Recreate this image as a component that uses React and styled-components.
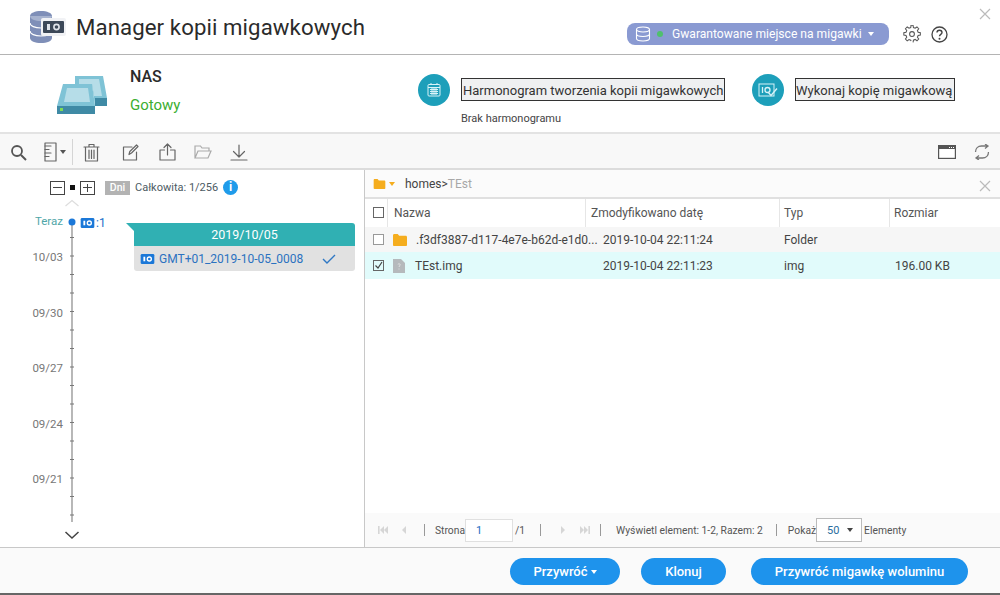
import React from 'react';
import styled, { createGlobalStyle } from 'styled-components';

const Global = createGlobalStyle`
  html, body { margin: 0; padding: 0; background: #fff; }
  body { font-family: Roboto, "Liberation Sans", sans-serif; color: #333; }
`;
const Page = styled.div`
  width: 1000px; height: 595px; display: flex; flex-direction: column; overflow: hidden; position: relative;
  border-bottom: 2px solid #666; box-sizing: border-box;
`;
const TitleBar = styled.header`
  height: 54px; flex: none; display: flex; align-items: center; padding-left: 29px; border-bottom: 1px solid #b4b4b4; background: #fff;
`;
const Title = styled.h1`
  font-size: 22.2px; font-weight: 400; margin: 0 0 0 9px; color: #2b2b2b; white-space: nowrap; letter-spacing: .1px;
`;
const Pill = styled.div`
  margin-left: 262px; margin-top: 14px; width: 262px; height: 22px; border-radius: 8px; background: #8a9ad2; color: #fff; display: flex; align-items: center; font-size: 12.1px; padding-left: 8px; box-sizing: border-box;
`;
const Dot = styled.span`width: 6px; height: 6px; border-radius: 50%; background: #4fc06c; margin: 0 9px 0 6px;`;
const Caret = styled.span`
  width: 0; height: 0; border-left: 3px solid transparent; border-right: 3px solid transparent; border-top: 4px solid ${p => p.$c || '#fff'}; margin-left: ${p => p.$ml || 0}px; display: inline-block;
`;
const TopIcons = styled.div`display: flex; align-items: center; gap: 10px; margin: 14px 0 0 14px;`;
const Close = styled.button`
  position: absolute; top: ${p => p.$t}px; right: ${p => p.$r}px; width: 12px; height: 12px; padding: 0; border: 0; background: none; display: flex;
`;
const InfoBar = styled.section`
  height: 79px; flex: none; border-bottom: 2px solid #e3e3e3; box-sizing: border-box; display: flex; background: #fff;
`;
const NasIcon = styled.div`margin: 20px 0 0 57px; width: 50px; height: 39px; flex: none;`;
const NasText = styled.div`margin: 13px 0 0 23px; width: 288px; flex: none;`;
const NasName = styled.div`font-size: 16px; font-weight: 500; color: #2b2b2b; line-height: 17px;`;
const NasState = styled.div`font-size: 15px; color: #3bae30; line-height: 17px; margin-top: 12px;`;
const Action = styled.div`display: flex; margin: 19px 0 0 ${p => p.$ml}px; align-items: flex-start;`;
const Round = styled.div`
  width: 32px; height: 32px; border-radius: 50%; background: #1d9fba; display: flex; align-items: center; justify-content: center; flex: none;
`;
const ActionCol = styled.div`margin-left: 11px; display: flex; flex-direction: column;`;
const FocusBtn = styled.div`
  height: 23px; margin-top: 4px; box-sizing: border-box; border: 1px solid #333; background: #eff0f1; font-size: 13px; color: #333; line-height: 23px; padding: 0 0 0 ${p => p.$pl}px; white-space: nowrap; width: ${p => p.$w}px;
`;
const Sub = styled.div`font-size: 11px; color: #444; margin-top: 11px;`;
const Toolbar = styled.nav`
  height: 36px; flex: none; background: #f8f8f8; border-bottom: 2px solid #dcdcdc; box-sizing: border-box; display: flex; align-items: center; padding: 2px 0 0 10px;
`;
const Tool = styled.span`display: flex; margin-left: ${p => p.$ml || 0}px; align-items: center;`;
const Sep = styled.span`width: 1px; height: 26px; background: #d5d5d5; margin-left: 6px;`;
const Main = styled.main`flex: 1; min-height: 0; display: flex;`;
const Left = styled.aside`
  width: 365px; flex: none; border-right: 1px solid #c8c8c8; box-sizing: border-box; position: relative; background: #fff;
`;
const ZoomRow = styled.div`display: flex; align-items: center; height: 17px; margin: 9px 0 0 50px;`;
const SquareBtn = styled.span`
  width: 15px; height: 14px; border: 1px solid #444; box-sizing: border-box; position: relative; display: block;
  &::before { content: ''; position: absolute; left: 2px; right: 2px; top: 5px; height: 1px; background: #444; }
  ${p => p.$plus ? `&::after { content: ''; position: absolute; top: 2px; bottom: 2px; left: 6px; width: 1px; background: #444; }` : ''}
`;
const MiniDot = styled.span`width: 5px; height: 5px; background: #111; margin: 0 5px;`;
const Dni = styled.span`
  margin-left: 10px; width: 25px; height: 14px; background: #b3b3b3; color: #fff; font-size: 10.5px; font-weight: 500; line-height: 14px; text-align: center;
`;
const Total = styled.span`font-size: 11px; color: #4d5b63; margin-left: 5px; white-space: nowrap;`;
const InfoDot = styled.span`
  width: 15px; height: 15px; border-radius: 50%; background: #1f9bea; color: #fff; font: 700 12px/15px Roboto, sans-serif; text-align: center; margin-left: 5px;
`;
const Axis = styled.div`position: absolute; left: 0; top: 0; bottom: 0; width: 130px;`;
const AxisLabels = styled.div`display: flex; flex-direction: column; position: absolute; top: 44px; left: 0; width: 63px; align-items: flex-end;`;
const AxisLabel = styled.div`
  height: ${p => p.$h}px; font-size: 11.5px; line-height: 14px; color: ${p => p.$c || '#777'};
`;
const AxisDraw = styled.svg`position: absolute; left: 62px; top: 25px;`;
const Count = styled.div`
  position: absolute; left: 80px; top: 46px; display: flex; align-items: center; font-size: 12px; color: #1a6fc9; gap: 1px;
`;
const Card = styled.div`position: absolute; left: 134px; top: 53px; width: 221px; border-radius: 3px; font-size: 12px;`;
const CardHead = styled.div`
  height: 23px; background: #30b0b3; color: #fff; text-align: center; font-size: 12.5px; line-height: 24px; border-radius: 0 3px 0 0; position: relative;
  &::before { content: ''; position: absolute; left: -8px; top: 0; width: 0; height: 0; border-top: 8px solid #30b0b3; border-left: 8px solid transparent; }
`;
const CardRow = styled.div`
  height: 25px; background: #e1e1e1; display: flex; align-items: center; padding-left: 6px; color: #2b72c0; border-radius: 0 0 3px 3px; font-size: 12px; gap: 4px;
`;
const Check = styled.span`margin-left: auto; margin-right: 19px; display: flex;`;
const Right = styled.section`flex: 1; min-width: 0; display: flex; flex-direction: column; position: relative;`;
const Crumb = styled.div`
  height: 29px; flex: none; background: #fbfbfb; border-bottom: 2px solid #e0e0e0; box-sizing: border-box; display: flex; align-items: center; padding: 1px 0 0 8px; font-size: 12px; color: #444;
`;
const CrumbPath = styled.span`margin-left: 10px;`;
const CrumbLast = styled.span`color: #a8a8a8;`;
const Row = styled.div`
  display: grid; grid-template-columns: 22px 198px 194px 110px 111px; height: ${p => p.$h}px; align-items: center; font-size: 12px; color: #444; background: ${p => p.$bg || 'transparent'};
`;
const HeadCell = styled.div`
  height: 100%; display: flex; align-items: center; box-sizing: border-box; padding: 0 0 1px ${p => p.$pl ?? 5}px; border-left: ${p => p.$nb ? 0 : '1px solid #e6e6e6'}; color: #555;
`;
const Cell = styled.div`display: flex; align-items: center; padding-left: ${p => p.$pl ?? 0}px; white-space: nowrap; gap: ${p => p.$gap ?? 8}px; min-width: 0;`;
const Box = styled.span`
  width: 11px; height: 11px; border: 1px solid ${p => p.$c || '#666'}; box-sizing: border-box; display: block; margin-left: 8px; background: ${p => p.$bg || '#fff'}; flex: none;
`;
const Spacer = styled.div`flex: 1;`;
const Pager = styled.div`
  height: 34px; flex: none; background: #fafafa; display: flex; align-items: center; padding-left: 12px; font-size: 10.3px; color: #555; white-space: nowrap;
`;
const PagerSep = styled.span`width: 1px; height: 12px; background: #999; margin: 0 ${p => p.$r}px 0 ${p => p.$l}px;`;
const PagerGap = styled.span`width: ${p => p.$w}px; flex: none;`;
const PageInput = styled.span`
  width: 48px; height: 23px; background: #fff; border: 1px solid #e0e0e0; box-sizing: border-box; font-size: 11px; line-height: 21px; color: #1b6ec2; padding-left: 10px; margin: 0 2px 0 0;
`;
const PageSelect = styled.span`
  width: 46px; height: 24px; background: #fff; border: 1px solid #bbb; box-sizing: border-box; font-size: 11px; color: #2a6d9e; display: flex; align-items: center; padding-left: 10px; gap: 8px; margin: 0 2px 0 0;
`;
const Footer = styled.footer`
  height: 46px; flex: none; background: #fafafa; display: flex; align-items: flex-start; padding: 10px 0 0 510px; box-sizing: border-box; border-top: 1px solid #c8c8c8;
`;
const Btn = styled.button`
  height: 27px; width: ${p => p.$w}px; margin-left: ${p => p.$ml || 0}px; border: 0; border-radius: 14px; background: #1e93ec; color: #fff; font: 500 13px Roboto, sans-serif; padding: 0; display: flex; align-items: center; justify-content: center; gap: 2px; flex: none;
`;

const IO = ({ w = 15, h = 11, c = '#1b78d8' }) => (
  <svg width={w} height={h} viewBox="0 0 15 11">
    <rect width="15" height="11" rx="1.5" fill={c} />
    <rect x="3" y="3" width="2" height="5" fill="#fff" />
    <circle cx="9.5" cy="5.5" r="2.2" fill="none" stroke="#fff" strokeWidth="1.5" />
  </svg>
);
const Logo = () => (
  <svg width="38" height="34" viewBox="0 0 38 34">
    <path d="M1 6c0-3 5-5 11-5s11 2 11 5v22c0 3-5 5-11 5S1 31 1 28z" fill="#7f8fb8" />
    <path d="M1 6c0 3 5 5 11 5s11-2 11-5" fill="#a7b3cf" />
    <path d="M1 13c0 3 5 5 11 5s11-2 11-5M1 21c0 3 5 5 11 5s11-2 11-5" fill="none" stroke="#fff" strokeWidth="1.2" />
    <rect x="12" y="8" width="25" height="18" rx="2" fill="#f1f2f5" />
    <rect x="14" y="11" width="21" height="12" rx="1" fill="#3c4858" />
    <rect x="18" y="14" width="3" height="6" fill="#dfe3ea" />
    <circle cx="27.5" cy="17" r="2.6" fill="none" stroke="#dfe3ea" strokeWidth="1.6" />
  </svg>
);
const Nas = () => (
  <svg width="50" height="39" viewBox="0 0 50 39">
    <path d="M18 1h28l4 22v8H38l-3-22H18z" fill="#7fc3d6" />
    <path d="M22 4h20l3 17H37l-2-12H22z" fill="#b6dde8" />
    <rect x="38" y="23" width="12" height="8" fill="#3f8aa5" />
    <path d="M6 9h29l3 22H0z" fill="#7fc3d6" />
    <path d="M10 13h21l2 14H7z" fill="#b6dde8" />
    <rect x="0" y="31" width="38" height="8" fill="#3f8aa5" />
    <rect x="3" y="33" width="3" height="3" fill="#7fdc55" />
  </svg>
);
const line = { fill: 'none', stroke: '#666', strokeWidth: 1.2, strokeLinejoin: 'round', strokeLinecap: 'round' };
const Folder = ({ w = 14, h = 12 }) => (
  <svg width={w} height={h} viewBox="0 0 14 12" style={{ flex: 'none' }}><path d="M0 1.5C0 .7.5 0 1.3 0h3.4l1.5 1.8h6.5c.7 0 1.3.6 1.3 1.3V11c0 .6-.5 1-1.2 1H1.2C.5 12 0 11.6 0 11z" fill="#f5ad1e" /></svg>
);
const CloseX = ({ c = '#bbb' }) => (
  <svg width="12" height="12" viewBox="0 0 12 12"><path d="M1 1l10 10M11 1L1 11" stroke={c} strokeWidth="1.2" /></svg>
);
const Skip = ({ dir, dbl }) => (
  <svg width="12" height="10" viewBox="0 0 12 10" style={dir === 'r' ? { transform: 'scaleX(-1)' } : undefined}>
    {dbl && <rect x="1" y="1" width="1.6" height="8" fill="#d6d6d6" />}
    <path d="M7 1v8L3 5z" fill="#d6d6d6" />
    {dbl && <path d="M11 1v8L7 5z" fill="#d6d6d6" />}
  </svg>
);

const ticks = Array.from({ length: 16 }, (_, i) => 42.5 + 18.5 * i);

export default function App() {
  return (
    <Page>
      <Global />
      <TitleBar>
        <Logo />
        <Title>Manager kopii migawkowych</Title>
        <Pill>
          <svg width="16" height="16" viewBox="0 0 16 16" fill="none" stroke="#fff" strokeWidth="1.1">
            <ellipse cx="8" cy="3.5" rx="6.5" ry="2.5" />
            <path d="M1.5 3.5v9c0 1.4 3 2.5 6.5 2.5s6.5-1.100 6.500-2.500v-9M1.500 8c0 1.400 3 2.500 6.500 2.500s6.500-1.100 6.500-2.500" />
          </svg>
          <Dot />
          Gwarantowane miejsce na migawki
          <Caret $ml={6} />
        </Pill>
        <TopIcons>
          <svg width="18" height="18" viewBox="0 0 24 24" fill="none" stroke="#555" strokeWidth="1.4">
            <circle cx="12" cy="12" r="3.2" />
            <path d="M10.3 2h3.400l.5 3 2.300 1 2.500-1.800 2.400 2.400L19.600 9.100l1 2.300 3 .5v3.400l-3 .5-1 2.300 1.800 2.500-2.400 2.400-2.500-1.800-2.300 1-.5 3" transform="translate(0 -1.500) scale(.98)" />
            <path d="M10.300 2l-.5 3-2.300 1L5 4.200 2.600 6.600l1.800 2.500-1 2.300-3 .5v3.400l3 .5 1 2.300-1.800 2.500L5 23.100l2.500-1.800 2.300 1 .5 1" transform="translate(.7 -1.500) scale(.98)" />
          </svg>
          <svg width="17" height="17" viewBox="0 0 17 17">
            <circle cx="8.500" cy="8.500" r="7.500" fill="none" stroke="#444" strokeWidth="1.300" />
            <path d="M6 6.500c0-1.500 1.100-2.300 2.500-2.300s2.500.9 2.500 2.200c0 2-2.500 2-2.500 3.900" fill="none" stroke="#444" strokeWidth="1.400" />
            <circle cx="8.500" cy="12.800" r="1" fill="#444" />
          </svg>
        </TopIcons>
        <Close $t={8} $r={9} aria-label="close"><CloseX /></Close>
      </TitleBar>
      <InfoBar>
        <NasIcon><Nas /></NasIcon>
        <NasText>
          <NasName>NAS</NasName>
          <NasState>Gotowy</NasState>
        </NasText>
        <Action $ml={0}>
          <Round>
            <svg width="16" height="16" viewBox="0 0 16 16" fill="none" stroke="#d8f3f8" strokeWidth="1">
              <rect x="2" y="2.500" width="12" height="11.500" rx="1" />
              <path d="M2 5.500h12M5 2V1M11 2V1M4 7.500h8M4 9.500h8M4 11.500h8M6 6v7M8 6v7M10 6v7" />
            </svg>
          </Round>
          <ActionCol>
            <FocusBtn $w={264} $pl={1}>Harmonogram tworzenia kopii migawkowych</FocusBtn>
            <Sub>Brak harmonogramu</Sub>
          </ActionCol>
        </Action>
        <Action $ml={27}>
          <Round>
            <svg width="20" height="16" viewBox="0 0 20 16" fill="none" stroke="#d8f3f8" strokeWidth="1">
              <rect x="1" y="2" width="15" height="12" />
              <path d="M4.500 5v6" strokeWidth="1.300" />
              <circle cx="9.500" cy="8" r="2.500" strokeWidth="1.300" />
              <path d="M10 10l3 3.500 6-7" strokeWidth="1.400" />
            </svg>
          </Round>
          <ActionCol>
            <FocusBtn $w={160} $pl={0}>Wykonaj kopię migawkową</FocusBtn>
          </ActionCol>
        </Action>
      </InfoBar>
      <Toolbar>
        <Tool>
          <svg width="17" height="17" viewBox="0 0 17 17"><circle cx="7" cy="7" r="5" fill="none" stroke="#555" strokeWidth="1.800" /><path d="M11 11l5 5" stroke="#555" strokeWidth="2" /></svg>
        </Tool>
        <Tool $ml={17}>
          <svg width="14" height="20" viewBox="0 0 14 20" {...line}><rect x="1" y="1" width="11" height="18" /><path d="M1 4h6M1 7.500h4M1 11h6M1 14.500h4" /></svg>
          <Caret $c="#555" $ml={2} />
        </Tool>
        <Sep />
        <Tool $ml={10}>
          <svg width="17" height="19" viewBox="0 0 17 19" {...line}><path d="M1 4h15M6 4V1.500h5V4M2.500 4v14h12V4M6 7v8.500M8.500 7v8.500M11 7v8.500" /></svg>
        </Tool>
        <Tool $ml={22}>
          <svg width="17" height="17" viewBox="0 0 17 17" {...line}><path d="M10 3H1.500v13h13V8M7 10.500l.8-3L14.500 1l1.500 1.500L9.500 9z" /></svg>
        </Tool>
        <Tool $ml={20}>
          <svg width="17" height="18" viewBox="0 0 17 18" {...line}><path d="M5.500 7H1v10h15V7h-4.500M8.500 12V1M5 4.500L8.500 1 12 4.500" /></svg>
        </Tool>
        <Tool $ml={18}>
          <svg width="18" height="15" viewBox="0 0 18 15" fill="none" stroke="#aaa" strokeWidth="1.200"><path d="M1 13V1h5.500l1.500 2h7v3M1 13l3-7h13l-3 7z" /></svg>
        </Tool>
        <Tool $ml={18}>
          <svg width="18" height="17" viewBox="0 0 18 17" {...line}><path d="M9 1v12M3.500 7.500L9 13l5.500-5.500M1 16h16" /></svg>
        </Tool>
        <Spacer />
        <Tool>
          <svg width="18" height="14" viewBox="0 0 18 14"><rect x=".6" y=".6" width="16.800" height="12.800" fill="#fff" stroke="#555" strokeWidth="1.200" /><rect x="1" y="1" width="16" height="3" fill="#555" /><path d="M11 2.500h5" stroke="#fff" strokeDasharray="1 1" /></svg>
        </Tool>
        <Tool $ml={18}>
          <svg width="16" height="16" viewBox="0 0 16 16" fill="none" stroke="#777" strokeWidth="1.300"><path d="M1.500 8C1.500 4.500 4 2 7.500 2h6M11 0l3 2-3 2.500M14.500 8c0 3.500-2.500 6-6 6h-6M5 11.500L2 14l3 2" /></svg>
        </Tool>
        <Tool $ml={10} />
      </Toolbar>
      <Main>
        <Left>
          <ZoomRow>
            <SquareBtn />
            <MiniDot />
            <SquareBtn $plus />
            <Dni>Dni</Dni>
            <Total>Całkowita: 1/256</Total>
            <InfoDot>i</InfoDot>
          </ZoomRow>
          <Axis>
            <AxisLabels>
              <AxisLabel $h={36} $c="#4fa6a8">Teraz</AxisLabel>
              <AxisLabel $h={56}>10/03</AxisLabel>
              <AxisLabel $h={55}>09/30</AxisLabel>
              <AxisLabel $h={56}>09/27</AxisLabel>
              <AxisLabel $h={55}>09/24</AxisLabel>
              <AxisLabel $h={14}>09/21</AxisLabel>
            </AxisLabels>
            <AxisDraw width="20" height="350" viewBox="0 0 20 350">
              <path d="M3.500 11L10 5.500l6.500 5.500" fill="none" stroke="#ddd" strokeWidth="1.200" />
              <path d="M10 27V327" stroke="#888" strokeWidth="1.200" />
              {ticks.map(y => <path key={y} d={`M8 ${y}h4`} stroke="#777" strokeWidth="1" />)}
              <circle cx="10" cy="27" r="3.500" fill="#1b78d8" />
              <path d="M3.500 337l6.500 6 6.500-6" fill="none" stroke="#444" strokeWidth="1.500" />
            </AxisDraw>
          </Axis>
          <Count><IO w={15} h={10} /> :1</Count>
          <Card>
            <CardHead>2019/10/05</CardHead>
            <CardRow>
              <IO w={15} h={10} />
              GMT+01_2019-10-05_0008
              <Check>
                <svg width="14" height="10" viewBox="0 0 14 10"><path d="M1 5l4 4 8-8" fill="none" stroke="#2f78c4" strokeWidth="1.400" /></svg>
              </Check>
            </CardRow>
          </Card>
        </Left>
        <Right>
          <Crumb>
            <Folder w={13} h={10} />
            <Caret $c="#f5ad1e" $ml={3} />
            <CrumbPath>homes&gt;<CrumbLast>TEst</CrumbLast></CrumbPath>
            <Close $t={10} $r={9} aria-label="close path"><CloseX /></Close>
          </Crumb>
          <Row $h={28}>
            <HeadCell $nb $pl={0}><Box /></HeadCell>
            <HeadCell $pl={6}>Nazwa</HeadCell>
            <HeadCell $pl={5}>Zmodyfikowano datę</HeadCell>
            <HeadCell $pl={4}>Typ</HeadCell>
            <HeadCell $pl={4}>Rozmiar</HeadCell>
          </Row>
          <Row $h={25} $bg="#f6f6f6">
            <Cell><Box $c="#999" /></Cell>
            <Cell $pl={6} $gap={9}><Folder /><span>.f3df3887-d117-4e7e-b62d-e1d0...</span></Cell>
            <Cell $pl={18}>2019-10-04 22:11:24</Cell>
            <Cell $pl={5}>Folder</Cell>
            <Cell />
          </Row>
          <Row $h={27} $bg="#e1fbfb">
            <Cell>
              <Box $bg="#e1fbfb">
                <svg width="9" height="9" viewBox="0 0 9 9" style={{ display: 'block' }}><path d="M1.500 4.500l2.500 2.500 4-6" fill="none" stroke="#444" strokeWidth="1.200" /></svg>
              </Box>
            </Cell>
            <Cell $pl={6} $gap={10}>
              <svg width="12" height="14" viewBox="0 0 12 14" style={{ flex: 'none' }}>
                <path d="M0 0h8l4 4v10H0z" fill="#b5b9bc" />
                <path d="M5 5.500c0-1 2.200-1 2.200.3 0 1-1.200 1-1.200 2.200M6 9.500v1" stroke="#e8e8e8" fill="none" strokeWidth=".8" />
              </svg>
              <span>TEst.img</span>
            </Cell>
            <Cell $pl={18}>2019-10-04 22:11:23</Cell>
            <Cell $pl={5}>img</Cell>
            <Cell $pl={6}>196.00 KB</Cell>
          </Row>
          <Spacer />
          <Pager>
            <Skip dbl />
            <PagerGap $w={10} />
            <Skip />
            <PagerSep $l={13} $r={10} />
            Strona
            <PageInput>1</PageInput>
            /1
            <PagerSep $l={15} $r={15} />
            <Skip dir="r" />
            <PagerGap $w={11} />
            <Skip dir="r" dbl />
            <PagerSep $l={9} $r={15} />
            Wyświetl element: 1-2, Razem: 2
            <PagerSep $l={13} $r={11} />
            Pokaż
            <PageSelect>50<Caret $c="#444" /></PageSelect>
            Elementy
          </Pager>
        </Right>
      </Main>
      <Footer>
        <Btn $w={110}>Przywróć<Caret $ml={1} /></Btn>
        <Btn $w={85} $ml={21}>Klonuj</Btn>
        <Btn $w={217} $ml={25}>Przywróć migawkę woluminu</Btn>
      </Footer>
    </Page>
  );
}
